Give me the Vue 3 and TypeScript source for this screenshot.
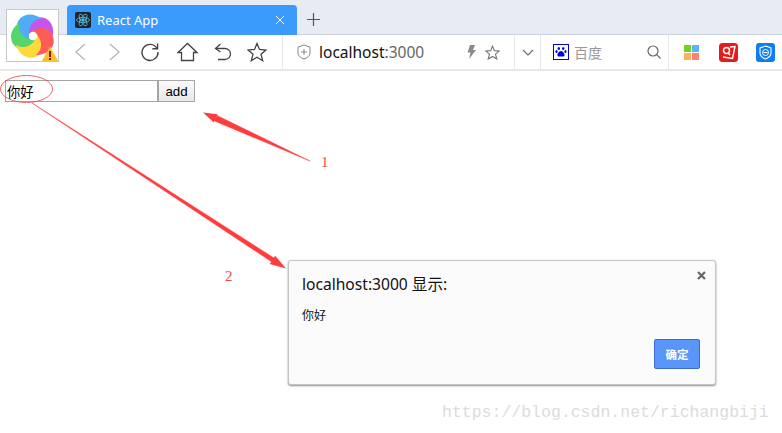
<script setup lang="ts">
const watermark: string = 'https://blog.csdn.net/richangbiji'
const bladePath: string = 'M-5 -1 C-8 -13 1 -21 12 -17 C19 -13 21 -5 18 3 C16 -5 5 -9 -5 -1Z'
const blades: { color: string; angle: number }[] = [
  { color: '#c655ec', angle: 0 },
  { color: '#4facf6', angle: 288 },
  { color: '#56d66a', angle: 216 },
  { color: '#ffd83a', angle: 144 },
  { color: '#ff5b57', angle: 72 },
]
</script>

<template>
  <div class="page">
    <header class="tabbar">
      <div class="tab">
        <span class="favicon">
          <svg width="16" height="16" viewBox="0 0 16 16" fill="none" stroke="#53c1de" stroke-width="0.8">
            <ellipse cx="8" cy="8" rx="6.5" ry="2.6" />
            <ellipse cx="8" cy="8" rx="6.5" ry="2.6" transform="rotate(60 8 8)" />
            <ellipse cx="8" cy="8" rx="6.5" ry="2.6" transform="rotate(120 8 8)" />
            <circle cx="8" cy="8" r="1.3" fill="#53c1de" />
          </svg>
        </span>
        <span class="tab-title">React App</span>
        <svg class="tab-close" width="10" height="10" viewBox="0 0 10 10" stroke="#fff" stroke-width="1">
          <path d="M1 1 9 9M9 1 1 9" />
        </svg>
      </div>
      <svg class="new-tab" width="13" height="13" viewBox="0 0 13 13" stroke="#555" stroke-width="1.2">
        <path d="M6.5 0V13M0 6.5H13" />
      </svg>
    </header>

    <nav class="toolbar">
      <div class="nav-icons">
        <svg width="14" height="20" viewBox="0 0 14 20" fill="none" stroke="#b5b5b5" stroke-width="1.3"><path d="M12 2 3 10l9 8" /></svg>
        <svg class="fwd" width="14" height="20" viewBox="0 0 14 20" fill="none" stroke="#b5b5b5" stroke-width="1.3"><path d="M2 2l9 8-9 8" /></svg>
        <svg class="reload" width="20" height="20" viewBox="0 0 20 20" fill="none" stroke="#444" stroke-width="1.4"><path d="M17 6.5A8 8 0 1 0 18 10" /><path d="M17.6 1.5V6.8H12.4" /></svg>
        <svg class="home" width="21" height="20" viewBox="0 0 21 20" fill="none" stroke="#444" stroke-width="1.3"><path d="M1 10.5 10.5 1.5l9.500 9H16.500V18.500H4.500V10.500Z" /></svg>
        <svg class="undo" width="18" height="20" viewBox="0 0 18 20" fill="none" stroke="#444" stroke-width="1.3"><path d="M6.500 2 1.500 6.500l5 3.500" /><path d="M2 6.500h9a5.500 5.500 0 0 1 0 11H4" /></svg>
        <svg class="star" width="20" height="20" viewBox="0 0 20 20" fill="none" stroke="#444" stroke-width="1.3"><path d="M10 1.500 12.500 7.500 19 8 14 12.200 15.700 18.700 10 15.200 4.300 18.700 6 12.200 1 8 7.500 7.500Z" /></svg>
      </div>

      <div class="address">
        <svg width="14" height="16" viewBox="0 0 14 16" fill="none" stroke="#888" stroke-width="1"><path d="M7 1 13 3V9C13 12 10 14 7 15 4 14 1 12 1 9V3Z" /><path d="M7 5V11M4 8H10" /></svg>
        <span class="url">localhost<span class="port">:3000</span></span>
        <svg class="bolt" width="10" height="16" viewBox="0 0 10 16" fill="#8a8a8a"><path d="M4 1H9L7 6H10L3 15 4.500 8.500H1.500Z" /></svg>
        <svg class="addr-star" width="15" height="15" viewBox="0 0 20 20" fill="none" stroke="#777" stroke-width="1.500"><path d="M10 1.500 12.500 7.500 19 8 14 12.200 15.700 18.700 10 15.200 4.300 18.700 6 12.200 1 8 7.500 7.500Z" /></svg>
      </div>

      <div class="dropdown">
        <svg width="12" height="7" viewBox="0 0 12 7" fill="none" stroke="#666" stroke-width="1.100"><path d="M1 1l5 5 5-5" /></svg>
      </div>

      <div class="search">
        <svg class="paw" width="16" height="16" viewBox="0 0 16 16">
          <rect x="0.500" y="0.500" width="15" height="15" fill="#fff" stroke="#0000e0" />
          <g fill="#0000e0"><ellipse cx="5.800" cy="4.500" rx="1.200" ry="1.600" /><ellipse cx="10.200" cy="4.500" rx="1.200" ry="1.600" /><ellipse cx="3.500" cy="7.500" rx="1.100" ry="1.500" /><ellipse cx="12.500" cy="7.500" rx="1.100" ry="1.500" /><path d="M8 7c2 0 4 3 3.500 4.500C11 13 9 12.500 8 12.500S5 13 4.500 11.500C4 10 6 7 8 7Z" /></g>
        </svg>
        <span class="engine">百度</span>
        <svg class="magnifier" width="14" height="14" viewBox="0 0 14 14" fill="none" stroke="#666" stroke-width="1.200"><circle cx="6" cy="6" r="5" /><path d="M9.700 9.700 13.500 13.500" /></svg>
      </div>

      <div class="extensions">
        <svg width="15" height="15" viewBox="0 0 15 15">
          <rect width="7" height="7" fill="#6fd321" /><rect x="8" width="7" height="7" fill="#5cb4f8" /><rect y="8" width="7" height="7" fill="#ffb05c" /><rect x="8" y="8" width="7" height="7" fill="#ff8270" />
        </svg>
        <svg class="ext-red" width="19" height="19" viewBox="0 0 19 19">
          <rect width="19" height="19" rx="3.500" fill="#e21d1d" />
          <path d="M11 4 16 3.500 13.500 15.500 4 14" fill="none" stroke="#fff" stroke-width="1.400" />
          <circle cx="7.500" cy="7.500" r="3" fill="none" stroke="#fff" stroke-width="1.500" />
          <path d="M9 10 11 12" stroke="#fff" stroke-width="1.400" />
        </svg>
        <svg class="ext-blue" width="19" height="19" viewBox="0 0 19 19">
          <rect width="19" height="19" rx="3" fill="#0f7df2" />
          <path d="M9.500 3 15 5V10C15 13 12 15 9.500 16 7 15 4 13 4 10V5Z" fill="none" stroke="#fff" stroke-width="1.100" />
          <circle cx="9.500" cy="9.500" r="3" fill="none" stroke="#fff" stroke-width="1" />
          <path d="M7.500 9.500H11.500" stroke="#fff" stroke-width="1" />
        </svg>
      </div>
    </nav>

    <main class="content">
      <form class="todo-form" @submit.prevent>
        <input class="todo-input" type="text" value="你好" />
        <button class="todo-add" type="button">add</button>
      </form>
    </main>

    <div class="app-logo">
      <svg width="46" height="46" viewBox="-22 -22 44 44">
        <path
          v-for="b in blades"
          :key="b.angle"
          :d="bladePath"
          :fill="b.color"
          :transform="`rotate(${b.angle})`"
        />
        <circle r="4" fill="#fff" />
      </svg>
      <svg class="warn" width="18" height="16" viewBox="0 0 18 16">
        <path d="M9 .500 17.500 15.500H.500Z" fill="#fbc02d" />
        <path d="M8 5H10V11H8ZM8 12H10V14H8Z" fill="#8c1b1b" />
      </svg>
    </div>

    <svg class="annotations" width="782" height="433" viewBox="0 0 782 433">
      <ellipse cx="26.500" cy="89" rx="26" ry="13.500" fill="none" stroke="#f03c3c" stroke-width="0.800" />
      <path d="M32 103 274 258 272 262Z" fill="#ff3d3d" stroke="#ff3d3d" stroke-width="0.500" />
      <path d="M286 268.500 275.200 255.700 269.800 264.100Z" fill="#ff3d3d" />
      <path d="M310 161 217 115.500 214.500 121Z" fill="#ff3d3d" stroke="#ff3d3d" stroke-width="0.500" />
      <path d="M203 112.500 217.600 114.200 213.800 122.400Z" fill="#ff3d3d" />
    </svg>
    <span class="note note-one">1</span>
    <span class="note note-two">2</span>

    <section class="dialog">
      <h1 class="dialog-title">localhost:3000 显示:</h1>
      <p class="dialog-body">你好</p>
      <svg class="dialog-close" width="9" height="9" viewBox="0 0 9 9" stroke="#666" stroke-width="2.200"><path d="M1 1 8 8M8 1 1 8" /></svg>
      <div class="dialog-actions">
        <button class="dialog-ok" type="button">确定</button>
      </div>
    </section>

    <span class="watermark">{{ watermark }}</span>
  </div>
</template>

<style>
html, body { margin: 0; background: #fff; }
</style>

<style scoped>
.page {
  position: relative;
  width: 782px;
  height: 433px;
  overflow: hidden;
  background: #fff;
  font-family: "Liberation Sans", "Noto Sans CJK SC", sans-serif;
}
.tabbar {
  display: flex;
  align-items: flex-end;
  box-sizing: border-box;
  height: 35px;
  padding-left: 67px;
  background: #e7ebf4;
  border-bottom: 1px solid #ccd3e0;
}
.tab {
  display: flex;
  align-items: center;
  box-sizing: border-box;
  width: 230px;
  height: 30px;
  margin-bottom: -1px;
  padding: 0 12px 0 8px;
  background: #3a9bfd;
  border-radius: 4px 4px 0 0;
  color: #fff;
}
.favicon {
  display: flex;
  align-items: center;
  justify-content: center;
  width: 16px;
  height: 16px;
  background: #20232a;
  border-radius: 2px;
}
.tab-title {
  flex: 1;
  margin-left: 6px;
  font-family: "Noto Sans", sans-serif;
  font-size: 13px;
}
.new-tab { margin: 0 0 8px 10px; }
.toolbar {
  display: flex;
  align-items: stretch;
  box-sizing: border-box;
  height: 36px;
  background: #fff;
  border-bottom: 2px solid #e8e8e8;
}
.nav-icons {
  display: flex;
  align-items: center;
  box-sizing: border-box;
  width: 283px;
  padding-left: 73px;
  border-right: 1px solid #e8e8e8;
}
.fwd { margin-left: 21px; }
.reload { margin-left: 18px; }
.home { margin-left: 17px; }
.undo { margin-left: 16px; }
.star { margin-left: 15px; }
.address {
  display: flex;
  align-items: center;
  box-sizing: border-box;
  width: 232px;
  padding-left: 14px;
  border-right: 1px solid #e8e8e8;
}
.url {
  flex: 1;
  margin-left: 8px;
  font-family: "Noto Sans", sans-serif;
  font-size: 15.500px;
  color: #111;
}
.port { color: #666; }
.addr-star { margin: 0 14px 0 9px; }
.dropdown {
  display: flex;
  align-items: center;
  justify-content: center;
  box-sizing: border-box;
  width: 26px;
  border-right: 1px solid #e8e8e8;
}
.search {
  display: flex;
  align-items: center;
  box-sizing: border-box;
  width: 128px;
  padding: 0 7px 0 12px;
  border-right: 1px solid #e8e8e8;
}
.engine {
  flex: 1;
  margin-left: 5px;
  font-size: 14px;
  color: #999;
}
.extensions {
  display: flex;
  align-items: center;
  padding-left: 15px;
}
.ext-red { margin-left: 20px; }
.ext-blue { margin-left: 18px; }
.content { padding: 9px 5px 0; }
.todo-form { display: flex; }
.todo-input {
  box-sizing: border-box;
  width: 153px;
  height: 22px;
  margin: 0;
  padding: 1px;
  border: 1px solid #a3a3a3;
  outline: none;
  font-family: "Noto Sans CJK SC", sans-serif;
  font-size: 13.300px;
  color: #000;
}
.todo-add {
  box-sizing: border-box;
  width: 37px;
  height: 22px;
  margin: 0;
  padding: 0;
  border: 1px solid #a6a6a6;
  background: linear-gradient(#fafafa, #e8e8e8);
  font-family: "Liberation Sans", sans-serif;
  font-size: 13.300px;
  color: #000;
}
.app-logo {
  position: absolute;
  left: 6px;
  top: 9px;
  box-sizing: border-box;
  display: flex;
  align-items: center;
  justify-content: center;
  width: 53px;
  height: 53px;
  background: #fff;
  border: 1px solid #c8c8c8;
}
.warn { position: absolute; right: -1px; bottom: -1px; }
.annotations { position: absolute; left: 0; top: 0; pointer-events: none; }
.note {
  position: absolute;
  font-family: "Liberation Serif", serif;
  font-size: 15px;
  line-height: 17px;
  color: #ee4b4b;
}
.note-one { left: 321px; top: 154px; }
.note-two { left: 225px; top: 268px; }
.dialog {
  position: absolute;
  left: 288px;
  top: 260px;
  box-sizing: border-box;
  width: 428px;
  height: 125px;
  padding: 13px 15px 15px 13px;
  display: flex;
  flex-direction: column;
  background: #fbfbfb;
  border: 1px solid #c4c4c4;
  border-radius: 3px;
  box-shadow: 0 1px 2px rgba(0, 0, 0, 0.45);
}
.dialog-title {
  margin: 0;
  font-family: "Noto Sans", "Noto Sans CJK SC", sans-serif;
  font-size: 15.600px;
  font-weight: 400;
  line-height: 20px;
  color: #111;
}
.dialog-body {
  margin: 13px 0 0;
  font-family: "Noto Sans CJK SC", sans-serif;
  font-size: 12px;
  line-height: 16px;
  color: #111;
}
.dialog-close { position: absolute; right: 9px; top: 10px; }
.dialog-actions {
  display: flex;
  justify-content: flex-end;
  margin-top: auto;
}
.dialog-ok {
  box-sizing: border-box;
  width: 46px;
  height: 30px;
  padding: 0;
  border: 1px solid #3a6fd0;
  border-radius: 2px;
  background: #5a96fa;
  font-family: "Noto Sans CJK SC", sans-serif;
  font-size: 11.500px;
  font-weight: 700;
  color: #fff;
}
.watermark {
  position: absolute;
  left: 442px;
  top: 403px;
  font-family: "Liberation Mono", monospace;
  font-size: 16.500px;
  line-height: 20px;
  color: #dcdcdc;
  white-space: nowrap;
}
</style>
